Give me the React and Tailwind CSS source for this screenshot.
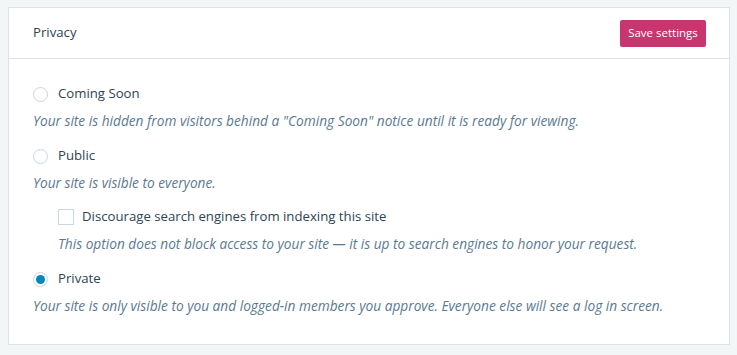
import { useState } from 'react'

const FONT = { fontFamily: '"Open Sans", "Noto Sans", "Liberation Sans", sans-serif' }

function Radio({ checked }) {
  return (
    <span className="w-[15px] h-[15px] rounded-full border border-[#c8d7e1] bg-white flex items-center justify-center shrink-0">
      {checked && <span className="w-[9px] h-[9px] rounded-full bg-[#0087be]" />}
    </span>
  )
}

export default function App() {
  const [mode, setMode] = useState('private')
  const [discourage, setDiscourage] = useState(false)

  return (
    <div className="min-h-[355px] bg-[#f3f6f6] pt-[7px] pl-[8px]" style={FONT}>
      <div className="w-[722px] bg-white border border-[#dde3e6]">
        {/* Header */}
        <div className="h-[51px] flex items-center justify-between pl-[24px] pr-[23px] border-b border-[#dde3e6]">
          <span className="text-[13.2px] text-[#2e4453]">Privacy</span>
          <button className="h-[27px] w-[86px] rounded-[2px] bg-[#c9356e] text-white text-[11.5px] font-medium">
            Save settings
          </button>
        </div>

        {/* Options */}
        <div className="pl-[24px] pt-[25px] pb-[28px] text-[#2e4453]">
          <label className="flex items-center gap-[10px] h-[20px] cursor-pointer" onClick={() => setMode('soon')}>
            <Radio checked={mode === 'soon'} />
            <span className="text-[13.2px]">Coming Soon</span>
          </label>
          <p className="mt-[7px] h-[20px] leading-[20px] text-[13.7px] italic text-[#5a7a90]">
            Your site is hidden from visitors behind a "Coming Soon" notice until it is ready for viewing.
          </p>

          <label className="mt-[15px] flex items-center gap-[10px] h-[20px] cursor-pointer" onClick={() => setMode('public')}>
            <Radio checked={mode === 'public'} />
            <span className="text-[13.2px]">Public</span>
          </label>
          <p className="mt-[7px] h-[20px] leading-[20px] text-[13.7px] italic text-[#5a7a90]">
            Your site is visible to everyone.
          </p>

          <div className="pl-[25px]">
            <label className="mt-[14px] flex items-center gap-[8px] h-[20px] cursor-pointer" onClick={() => setDiscourage(!discourage)}>
              <span className="w-[16px] h-[16px] border border-[#c8d7e1] bg-white shrink-0 flex items-center justify-center text-[#0087be] text-[12px]">
                {discourage ? '✓' : ''}
              </span>
              <span className="text-[13.2px]">Discourage search engines from indexing this site</span>
            </label>
            <p className="mt-[7px] h-[20px] leading-[20px] text-[13.7px] italic text-[#5a7a90]">
              This option does not block access to your site — it is up to search engines to honor your request.
            </p>
          </div>

          <label className="mt-[15px] flex items-center gap-[10px] h-[20px] cursor-pointer" onClick={() => setMode('private')}>
            <Radio checked={mode === 'private'} />
            <span className="text-[13.2px]">Private</span>
          </label>
          <p className="mt-[7px] h-[20px] leading-[20px] text-[13.7px] italic text-[#5a7a90]">
            Your site is only visible to you and logged-in members you approve. Everyone else will see a log in screen.
          </p>
        </div>
      </div>
    </div>
  )
}
